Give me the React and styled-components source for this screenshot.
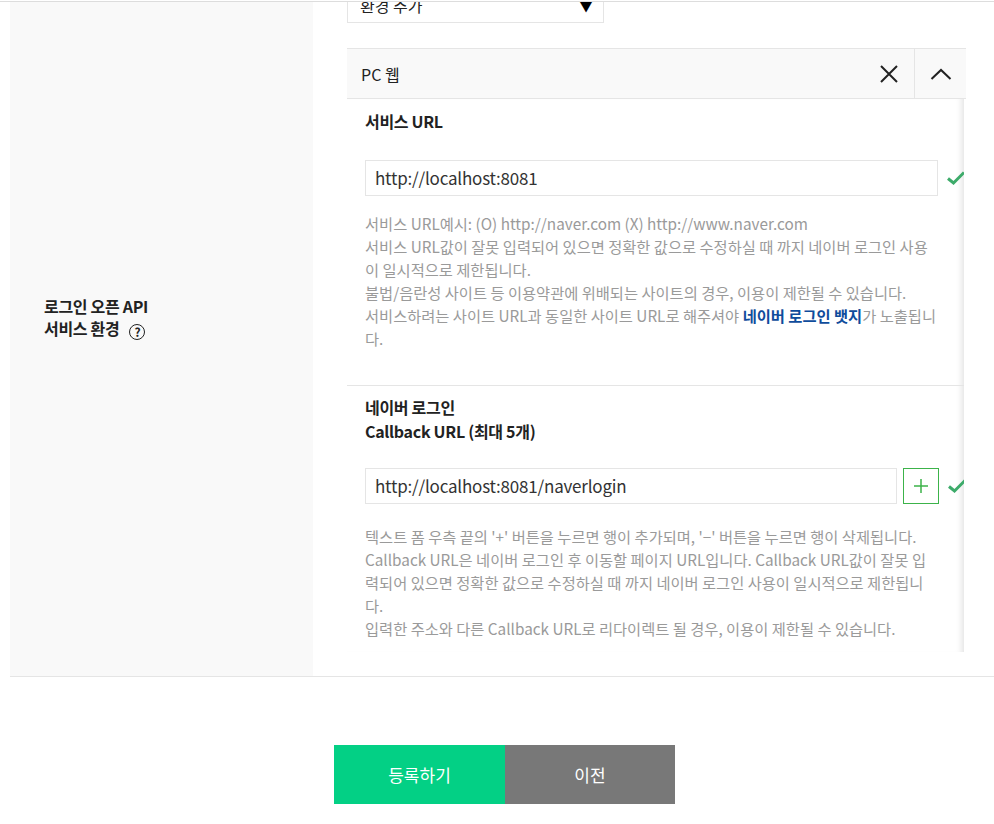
import { createGlobalStyle } from "styled-components";
import styled from "styled-components";

const GlobalStyle = createGlobalStyle`
  html, body {
    margin: 0;
    padding: 0;
    background: #ffffff;
  }

  body {
    font-family: "Noto Sans CJK KR", "Noto Sans", sans-serif;
    color: #222222;
  }
`;

const TopEdge = styled.div`
  border-bottom: 1px solid #dddddd;
  height: 1px;
`;

const Viewport = styled.div`
  overflow: hidden;
`;

const FormRow = styled.div`
  border-bottom: 1px solid #e5e5e5;
  display: flex;
  margin: -44px 0 0 10px;
`;

const LabelCell = styled.div`
  align-items: center;
  background-color: #f9f9f9;
  box-sizing: border-box;
  display: flex;
  flex: 0 0 303px;
  padding-left: 34px;
`;

const Label = styled.div`
  font-size: 16px;
  font-weight: bold;
  letter-spacing: -0.3px;
  line-height: 22px;
`;

const Help = styled.span`
  border: 1.5px solid #222222;
  border-radius: 50%;
  display: inline-flex;
  align-items: center;
  justify-content: center;
  font-size: 12px;
  font-weight: bold;
  height: 14px;
  line-height: 14px;
  margin-left: 10px;
  vertical-align: -2px;
  width: 14px;
`;

const FieldCell = styled.div`
  flex: 1;
  min-width: 0;
  padding: 29px 0 24px 34px;
`;

const Select = styled.div`
  align-items: center;
  border: 1px solid #e5e5e5;
  box-sizing: border-box;
  display: flex;
  font-size: 16px;
  height: 36px;
  justify-content: space-between;
  padding: 0 10px 0 12px;
  width: 257px;
`;

const Arrow = styled.span`
  font-size: 14px;
  color: #000000;
`;

const Panel = styled.div`
  margin-top: 25px;
  width: 619px;
`;

const PanelHead = styled.div`
  align-items: stretch;
  background-color: #f9f9f9;
  border-bottom: 1px solid #e5e5e5;
  border-top: 1px solid #e5e5e5;
  display: flex;
  height: 49px;
`;

const PanelTitle = styled.div`
  align-items: center;
  display: flex;
  flex: 1;
  font-size: 16px;
  padding-left: 14px;
`;

const HeadButton = styled.div`
  align-items: center;
  border-left: ${({ divided }) => (divided ? "1px solid #e5e5e5" : "none")};
  display: flex;
  justify-content: center;
  width: ${({ size }) => size}px;
`;

const PanelBody = styled.div`
  box-shadow: inset -7px 0 6px -5px rgba(0, 0, 0, 0.12);
  height: 553px;
  overflow: hidden;
  width: 617px;
`;

const Section = styled.div`
  border-top: ${({ divided }) => (divided ? "1px solid #e5e5e5" : "none")};
  padding: ${({ top }) => top}px 0 35px 18px;
`;

const SectionTitle = styled.div`
  font-size: 16px;
  font-weight: bold;
  letter-spacing: -0.3px;
  line-height: 24px;
`;

const InputRow = styled.div`
  align-items: center;
  display: flex;
  margin-top: ${({ gap }) => gap}px;
  width: 620px;
`;

const TextBox = styled.div`
  border: 1px solid #e5e5e5;
  box-sizing: border-box;
  color: #333333;
  font-size: 17px;
  height: 36px;
  letter-spacing: -0.2px;
  line-height: 34px;
  padding-left: 9px;
  width: ${({ width }) => width}px;
`;

const PlusButton = styled.div`
  align-items: center;
  border: 1px solid #3cb34a;
  box-sizing: border-box;
  display: flex;
  height: 36px;
  justify-content: center;
  margin-left: 6px;
  width: 36px;
`;

const Check = styled.svg`
  flex: 0 0 auto;
  margin-left: 8px;
`;

const HelpText = styled.div`
  color: #9a9a9a;
  font-size: 15.3px;
  line-height: 23px;
  margin-top: ${({ gap }) => gap}px;
`;

const HelpLine = styled.div`
  white-space: nowrap;
`;

const Strong = styled.b`
  color: #0f4c9c;
`;

const Actions = styled.div`
  display: flex;
  justify-content: center;
  margin-top: 68px;
  padding-left: 15px;
`;

const ActionButton = styled.button`
  background-color: ${({ primary }) => (primary ? "#03d085" : "#787878")};
  border: none;
  color: #ffffff;
  font-family: inherit;
  font-size: 17px;
  height: 59px;
  padding: 0;
  width: ${({ primary }) => (primary ? 171 : 170)}px;
`;

const CheckMark = () => (
  <Check width="20" height="16" viewBox="0 0 20 16">
    <path d="M2 8.5 L7.5 13 L18 2.5" fill="none" stroke="#3dab6a" strokeWidth="3" />
  </Check>
);

const App = () => (
  <>
    <GlobalStyle />
    <TopEdge />
    <Viewport>
      <FormRow>
        <LabelCell>
          <Label>
            로그인 오픈 API
            <br />
            서비스 환경
            <Help>?</Help>
          </Label>
        </LabelCell>

        <FieldCell>
          <Select>
            <span>환경 추가</span>
            <Arrow>▼</Arrow>
          </Select>

          <Panel>
            <PanelHead>
              <PanelTitle>PC 웹</PanelTitle>
              <HeadButton size={50}>
                <svg width="20" height="20" viewBox="0 0 20 20">
                  <path d="M2 2 L18 18 M18 2 L2 18" stroke="#222" strokeWidth="2" />
                </svg>
              </HeadButton>
              <HeadButton size={51} divided>
                <svg width="22" height="12" viewBox="0 0 22 12">
                  <path d="M1.5 11 L11 2 L20.5 11" fill="none" stroke="#222" strokeWidth="2" />
                </svg>
              </HeadButton>
            </PanelHead>

            <PanelBody>
              <Section top={10}>
                <SectionTitle>서비스 URL</SectionTitle>
                <InputRow gap={27}>
                  <TextBox width={573}>http://localhost:8081</TextBox>
                  <CheckMark />
                </InputRow>
                <HelpText gap={16}>
                  <HelpLine>서비스 URL예시: (O) http://naver.com (X) http://www.naver.com</HelpLine>
                  <HelpLine>서비스 URL값이 잘못 입력되어 있으면 정확한 값으로 수정하실 때 까지 네이버 로그인 사용</HelpLine>
                  <HelpLine>이 일시적으로 제한됩니다.</HelpLine>
                  <HelpLine>불법/음란성 사이트 등 이용약관에 위배되는 사이트의 경우, 이용이 제한될 수 있습니다.</HelpLine>
                  <HelpLine>
                    서비스하려는 사이트 URL과 동일한 사이트 URL로 해주셔야 <Strong>네이버 로그인 뱃지</Strong>가 노출됩니
                  </HelpLine>
                  <HelpLine>다.</HelpLine>
                </HelpText>
              </Section>

              <Section top={9} divided>
                <SectionTitle>
                  네이버 로그인
                  <br />
                  Callback URL (최대 5개)
                </SectionTitle>
                <InputRow gap={25}>
                  <TextBox width={532}>http://localhost:8081/naverlogin</TextBox>
                  <PlusButton>
                    <svg width="14" height="14" viewBox="0 0 14 14">
                      <path d="M7 0 V14 M0 7 H14" stroke="#3cb34a" strokeWidth="1.5" />
                    </svg>
                  </PlusButton>
                  <CheckMark />
                </InputRow>
                <HelpText gap={21}>
                  <HelpLine>텍스트 폼 우측 끝의 '+' 버튼을 누르면 행이 추가되며, '−' 버튼을 누르면 행이 삭제됩니다.</HelpLine>
                  <HelpLine>Callback URL은 네이버 로그인 후 이동할 페이지 URL입니다. Callback URL값이 잘못 입</HelpLine>
                  <HelpLine>력되어 있으면 정확한 값으로 수정하실 때 까지 네이버 로그인 사용이 일시적으로 제한됩니</HelpLine>
                  <HelpLine>다.</HelpLine>
                  <HelpLine>입력한 주소와 다른 Callback URL로 리다이렉트 될 경우, 이용이 제한될 수 있습니다.</HelpLine>
                </HelpText>
              </Section>
            </PanelBody>
          </Panel>
        </FieldCell>
      </FormRow>

      <Actions>
        <ActionButton primary>등록하기</ActionButton>
        <ActionButton>이전</ActionButton>
      </Actions>
    </Viewport>
  </>
);

export default App;
